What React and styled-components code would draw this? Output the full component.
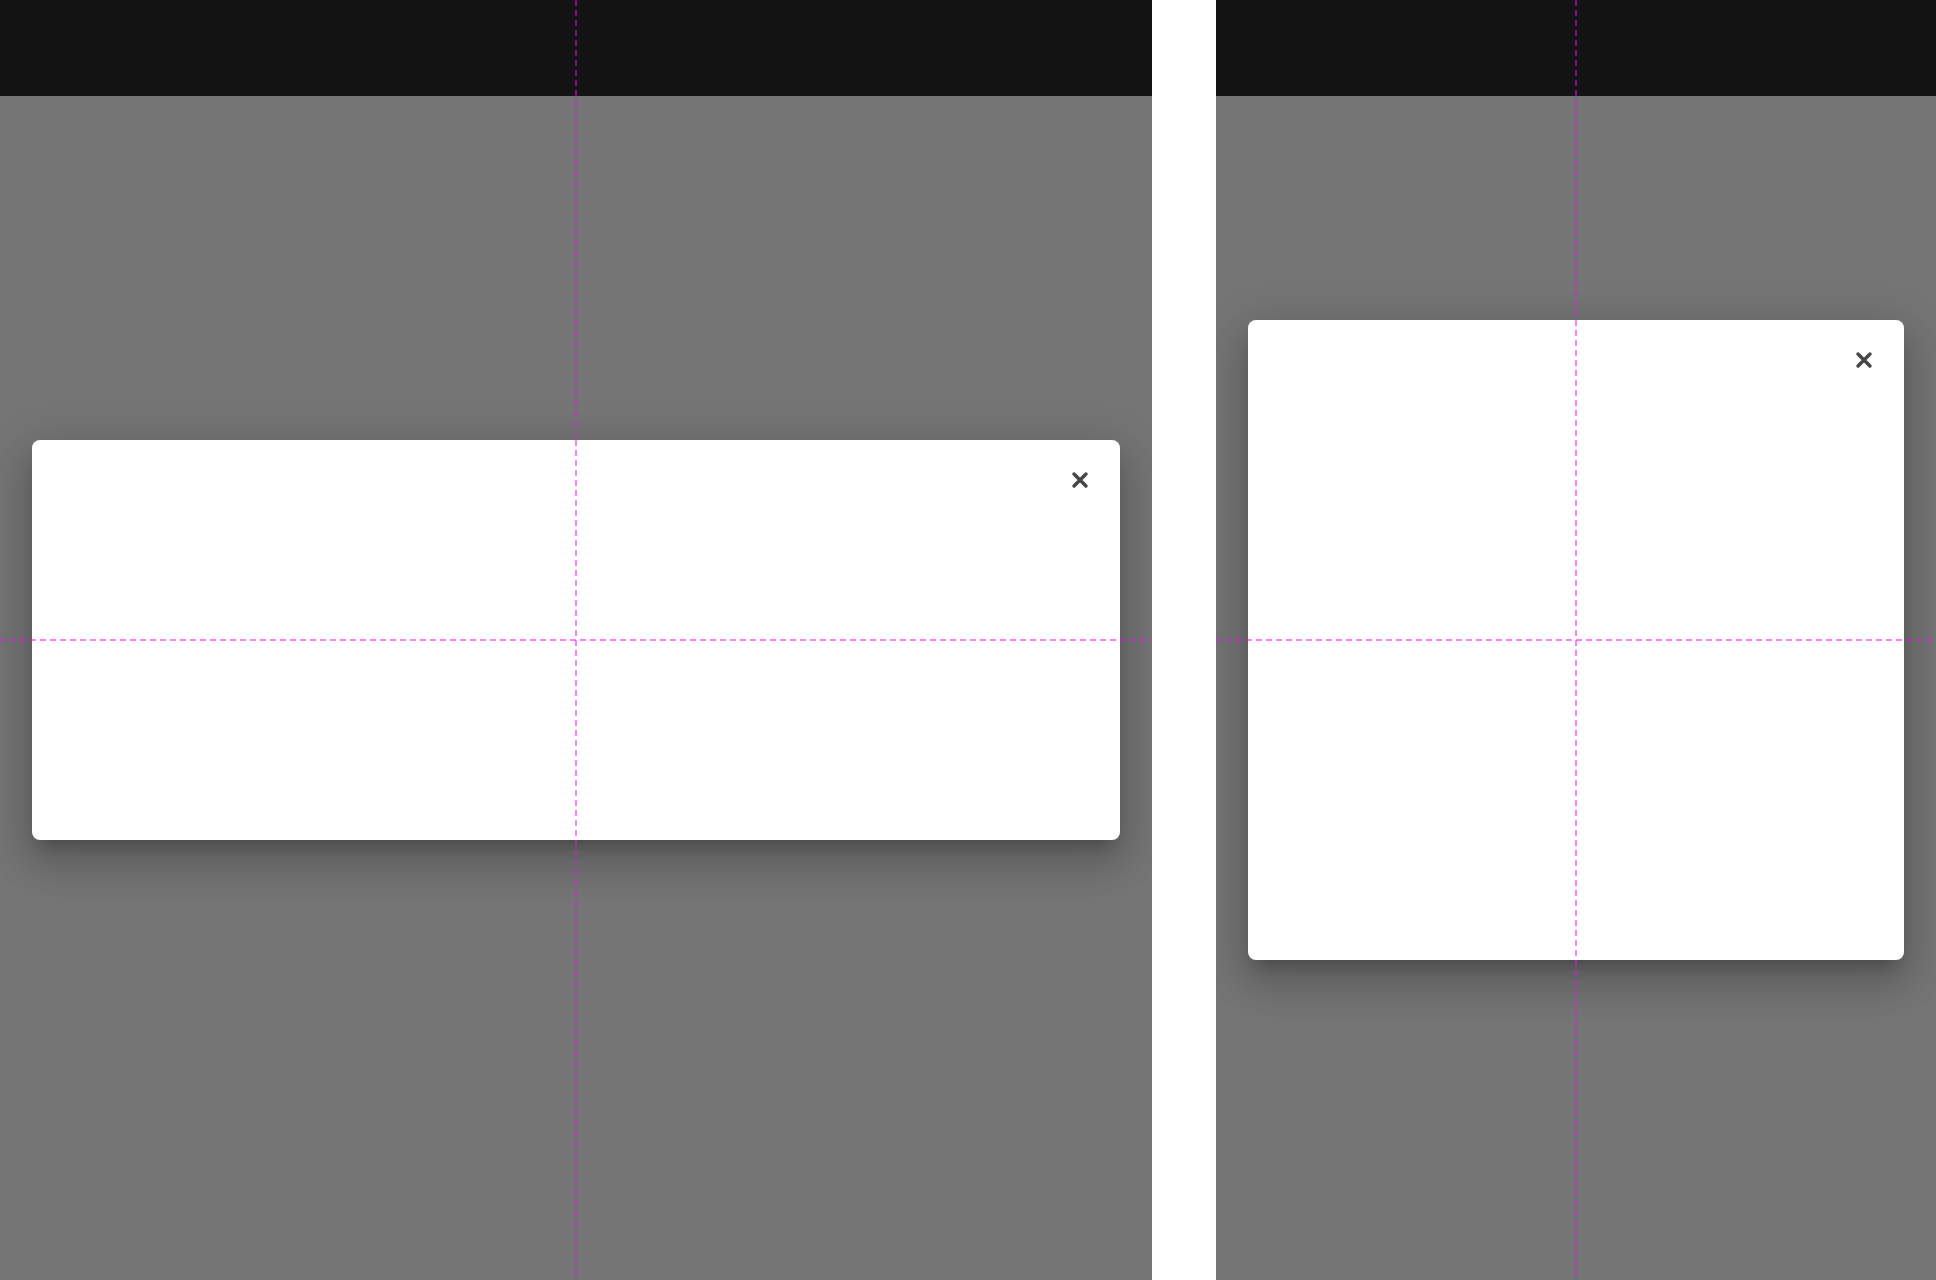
import React from "react";
import styled, { createGlobalStyle } from "styled-components";

const Global = createGlobalStyle`
  html, body { margin: 0; padding: 0; background: #ffffff; }
  body { font-family: "Liberation Sans", Arial, sans-serif; overflow: hidden; }
`;

const Stage = styled.div`
  display: flex;
  gap: 64px;
  width: 1936px;
  height: 1280px;
  background: #ffffff;
`;

const Panel = styled.div`
  position: relative;
  width: ${(p) => p.$width}px;
  height: 1280px;
  display: flex;
  flex-direction: column;
  background: #ffffff;
  overflow: hidden;
`;

const TopBar = styled.div`
  height: 96px;
  flex: none;
  background: #2b2b2b;
`;

const Content = styled.div`
  flex: 1;
  background: #ffffff;
`;

const Backdrop = styled.div`
  position: absolute;
  inset: 0;
  background: rgba(0, 0, 0, 0.54);
  display: flex;
  align-items: center;
  justify-content: center;
`;

const Modal = styled.div`
  position: relative;
  width: ${(p) => p.$w}px;
  height: ${(p) => p.$h}px;
  background: #ffffff;
  border-radius: 8px;
  box-shadow: 0 11px 15px -7px rgba(0, 0, 0, 0.2),
    0 24px 38px 3px rgba(0, 0, 0, 0.14), 0 9px 46px 8px rgba(0, 0, 0, 0.12);
`;

const CloseButton = styled.button`
  position: absolute;
  top: 30px;
  right: 30px;
  width: 20px;
  height: 20px;
  padding: 0;
  border: 0;
  background: transparent;
  display: flex;
  align-items: center;
  justify-content: center;
  cursor: pointer;
  color: #454545;
`;

const GuideV = styled.div`
  position: absolute;
  top: 0;
  bottom: 0;
  left: calc(50% - 1px);
  width: 2px;
  background: repeating-linear-gradient(
    to bottom,
    rgba(255, 0, 255, 0.5) 0 6px,
    transparent 6px 10px
  );
  pointer-events: none;
`;

const GuideH = styled.div`
  position: absolute;
  left: 0;
  right: 0;
  top: calc(50% - 1px);
  height: 2px;
  background: repeating-linear-gradient(
    to right,
    rgba(255, 0, 255, 0.5) 0 6px,
    transparent 6px 10px
  );
  pointer-events: none;
`;

const CloseIcon = () => (
  <svg width="20" height="20" viewBox="0 0 20 20" aria-hidden="true">
    <path
      d="M4 4 L16 16 M16 4 L4 16"
      stroke="currentColor"
      strokeWidth="3.4"
      strokeLinecap="round"
      fill="none"
    />
  </svg>
);

const Frame = ({ width, modalW, modalH }) => (
  <Panel $width={width}>
    <TopBar />
    <Content />
    <Backdrop>
      <Modal $w={modalW} $h={modalH}>
        <CloseButton aria-label="Close">
          <CloseIcon />
        </CloseButton>
      </Modal>
    </Backdrop>
    <GuideV />
    <GuideH />
  </Panel>
);

export default function App() {
  return (
    <>
      <Global />
      <Stage>
        <Frame width={1152} modalW={1088} modalH={400} />
        <Frame width={720} modalW={656} modalH={640} />
      </Stage>
    </>
  );
}
